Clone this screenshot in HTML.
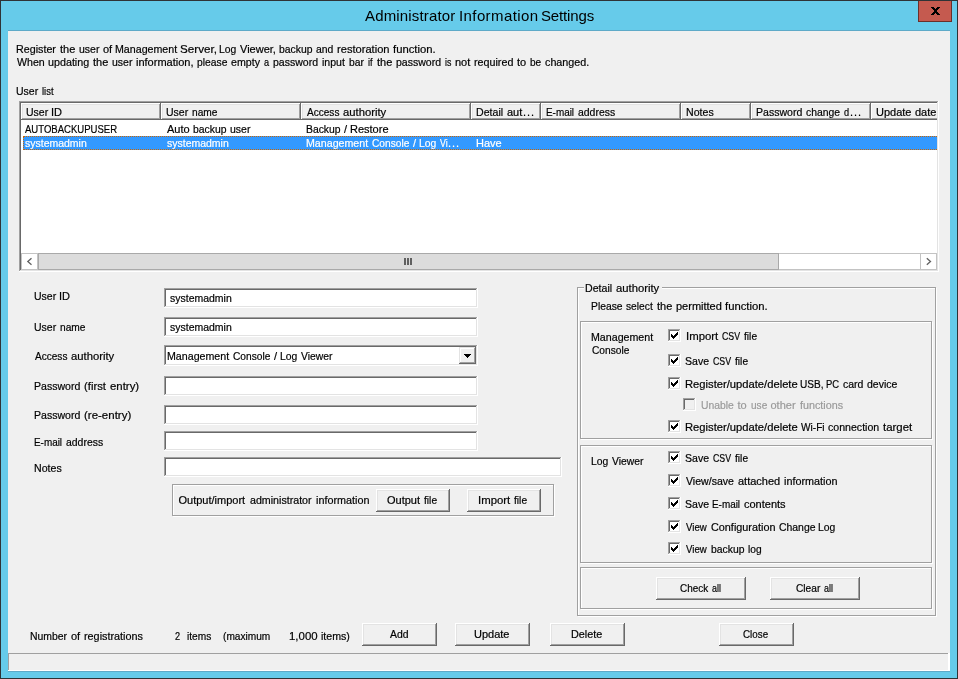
<!DOCTYPE html>
<html lang="en"><head><meta charset="utf-8"><title>Administrator Information Settings</title>
<style>
html,body{margin:0;padding:0}
body{width:958px;height:679px;position:relative;overflow:hidden;background:#66CBEA;font-family:"Liberation Sans",sans-serif;font-size:11px;line-height:13px;color:#000}
#w{position:absolute;left:0;top:0;width:958px;height:679px;overflow:hidden;will-change:transform}
#w div,#w span,#w svg{position:absolute;box-sizing:border-box}
#w span{white-space:pre;transform-origin:0 0;-webkit-text-stroke:0.2px currentColor}
#w .big{font-size:15px;line-height:20px;-webkit-text-stroke:0}
</style></head>
<body><div id="w">
<div style="left:0px;top:0px;width:958px;height:679px;background:#2F3336;"></div>
<div style="left:1px;top:1px;width:956px;height:677px;background:#66CBEA;"></div>
<div style="left:8px;top:30px;width:942px;height:1px;background:#5EAAC8;"></div>
<div style="left:8px;top:671px;width:942px;height:1px;background:#5EAAC8;"></div>
<div style="left:8px;top:31px;width:942px;height:640px;background:#F0F0F0;"></div>
<span class="big" style="left:365px;top:6px;letter-spacing:0.167px;">Administrator </span>
<span class="big" style="left:459px;top:6px;letter-spacing:0.4px;">Information </span>
<span class="big" style="left:541px;top:6px;letter-spacing:-0.143px;">Settings</span>
<div style="left:918px;top:1px;width:34px;height:21px;background:#C55A4F;border:1px solid #6B2F2A;border-top:0"></div>
<svg style="left:931px;top:7px" width="9" height="8" viewBox="0 0 9 8" shape-rendering="crispEdges"><g fill="#000"><rect x="0" y="0" width="3" height="1"/><rect x="6" y="0" width="3" height="1"/><rect x="1" y="1" width="3" height="1"/><rect x="5" y="1" width="3" height="1"/><rect x="2" y="2" width="5" height="1"/><rect x="3" y="3" width="3" height="1"/><rect x="3" y="4" width="3" height="1"/><rect x="2" y="5" width="5" height="1"/><rect x="1" y="6" width="3" height="1"/><rect x="5" y="6" width="3" height="1"/><rect x="0" y="7" width="3" height="1"/><rect x="6" y="7" width="3" height="1"/></g></svg>
<span style="left:16px;top:43px;transform:scaleX(0.975);">Register </span>
<span style="left:60px;top:43px;">the </span>
<span style="left:79px;top:43px;transform:scaleX(0.9524);">user </span>
<span style="left:103px;top:43px;">of </span>
<span style="left:115px;top:43px;transform:scaleX(0.9683);">Management </span>
<span style="left:180px;top:43px;transform:scaleX(1.0606);">Server, </span>
<span style="left:219px;top:43px;transform:scaleX(0.9412);">Log </span>
<span style="left:240px;top:43px;">Viewer, </span>
<span style="left:279px;top:43px;transform:scaleX(0.9429);">backup </span>
<span style="left:316px;top:43px;transform:scaleX(0.9444);">and </span>
<span style="left:337px;top:43px;transform:scaleX(1.0102);">restoration </span>
<span style="left:393px;top:43px;transform:scaleX(1.0244);">function.</span>
<span style="left:17px;top:56px;transform:scaleX(0.9643);">When </span>
<span style="left:48px;top:56px;transform:scaleX(0.9762);">updating </span>
<span style="left:93px;top:56px;">the </span>
<span style="left:112px;top:56px;transform:scaleX(0.9524);">user </span>
<span style="left:136px;top:56px;">information, </span>
<span style="left:197px;top:56px;transform:scaleX(0.9375);">please </span>
<span style="left:231px;top:56px;transform:scaleX(0.9667);">empty </span>
<span style="left:264px;top:56px;transform:scaleX(0.8333);">a </span>
<span style="left:273px;top:56px;transform:scaleX(0.9574);">password </span>
<span style="left:322px;top:56px;transform:scaleX(0.9583);">input </span>
<span style="left:349px;top:56px;transform:scaleX(0.9375);">bar </span>
<span style="left:368px;top:56px;transform:scaleX(0.8333);">if </span>
<span style="left:377px;top:56px;">the </span>
<span style="left:396px;top:56px;transform:scaleX(0.9574);">password </span>
<span style="left:445px;top:56px;transform:scaleX(0.8);">is </span>
<span style="left:455px;top:56px;">not </span>
<span style="left:474px;top:56px;transform:scaleX(0.975);">required </span>
<span style="left:517px;top:56px;">to </span>
<span style="left:530px;top:56px;transform:scaleX(0.9167);">be </span>
<span style="left:545px;top:56px;transform:scaleX(0.9778);">changed.</span>
<span style="left:16px;top:85px;transform:scaleX(0.9545);">User </span>
<span style="left:42px;top:85px;transform:scaleX(0.8571);">list</span>
<div style="left:19px;top:101px;width:920px;height:171px;background:#FFFFFF;"></div>
<div style="left:19px;top:101px;width:919px;height:170px;background:#A0A0A0;"></div>
<div style="left:20px;top:102px;width:918px;height:169px;background:#E3E3E3;"></div>
<div style="left:20px;top:102px;width:917px;height:168px;background:#696969;"></div>
<div style="left:21px;top:103px;width:916px;height:167px;background:#FFFFFF;"></div>
<div style="left:21px;top:103px;width:140px;height:17px;background:#696969;"></div>
<div style="left:21px;top:103px;width:139px;height:16px;background:#FFFFFF;"></div>
<div style="left:22px;top:104px;width:138px;height:15px;background:#A0A0A0;"></div>
<div style="left:22px;top:104px;width:137px;height:14px;background:#E3E3E3;"></div>
<div style="left:23px;top:105px;width:136px;height:13px;background:#F0F0F0;"></div>
<span style="left:26px;top:106px;transform:scaleX(0.9545);">User </span>
<span style="left:51px;top:106px;">ID</span>
<div style="left:161px;top:103px;width:140px;height:17px;background:#696969;"></div>
<div style="left:161px;top:103px;width:139px;height:16px;background:#FFFFFF;"></div>
<div style="left:162px;top:104px;width:138px;height:15px;background:#A0A0A0;"></div>
<div style="left:162px;top:104px;width:137px;height:14px;background:#E3E3E3;"></div>
<div style="left:163px;top:105px;width:136px;height:13px;background:#F0F0F0;"></div>
<span style="left:166px;top:106px;transform:scaleX(0.9545);">User </span>
<span style="left:192px;top:106px;transform:scaleX(0.9259);">name</span>
<div style="left:301px;top:103px;width:170px;height:17px;background:#696969;"></div>
<div style="left:301px;top:103px;width:169px;height:16px;background:#FFFFFF;"></div>
<div style="left:302px;top:104px;width:168px;height:15px;background:#A0A0A0;"></div>
<div style="left:302px;top:104px;width:167px;height:14px;background:#E3E3E3;"></div>
<div style="left:303px;top:105px;width:166px;height:13px;background:#F0F0F0;"></div>
<span style="left:307px;top:106px;transform:scaleX(0.9143);">Access </span>
<span style="left:343px;top:106px;transform:scaleX(1.0238);">authority</span>
<div style="left:471px;top:103px;width:70px;height:17px;background:#696969;"></div>
<div style="left:471px;top:103px;width:69px;height:16px;background:#FFFFFF;"></div>
<div style="left:472px;top:104px;width:68px;height:15px;background:#A0A0A0;"></div>
<div style="left:472px;top:104px;width:67px;height:14px;background:#E3E3E3;"></div>
<div style="left:473px;top:105px;width:66px;height:13px;background:#F0F0F0;"></div>
<span style="left:476px;top:106px;transform:scaleX(0.963);">Detail </span>
<span style="left:507px;top:106px;">aut</span>
<span style="left:523px;top:106px;letter-spacing:1.0px;">...</span>
<div style="left:541px;top:103px;width:140px;height:17px;background:#696969;"></div>
<div style="left:541px;top:103px;width:139px;height:16px;background:#FFFFFF;"></div>
<div style="left:542px;top:104px;width:138px;height:15px;background:#A0A0A0;"></div>
<div style="left:542px;top:104px;width:137px;height:14px;background:#E3E3E3;"></div>
<div style="left:543px;top:105px;width:136px;height:13px;background:#F0F0F0;"></div>
<span style="left:546px;top:106px;transform:scaleX(0.9);">E-mail </span>
<span style="left:578px;top:106px;transform:scaleX(0.9487);">address</span>
<div style="left:681px;top:103px;width:70px;height:17px;background:#696969;"></div>
<div style="left:681px;top:103px;width:69px;height:16px;background:#FFFFFF;"></div>
<div style="left:682px;top:104px;width:68px;height:15px;background:#A0A0A0;"></div>
<div style="left:682px;top:104px;width:67px;height:14px;background:#E3E3E3;"></div>
<div style="left:683px;top:105px;width:66px;height:13px;background:#F0F0F0;"></div>
<span style="left:686px;top:106px;transform:scaleX(0.9643);">Notes</span>
<div style="left:751px;top:103px;width:120px;height:17px;background:#696969;"></div>
<div style="left:751px;top:103px;width:119px;height:16px;background:#FFFFFF;"></div>
<div style="left:752px;top:104px;width:118px;height:15px;background:#A0A0A0;"></div>
<div style="left:752px;top:104px;width:117px;height:14px;background:#E3E3E3;"></div>
<div style="left:753px;top:105px;width:116px;height:13px;background:#F0F0F0;"></div>
<span style="left:756px;top:106px;transform:scaleX(0.9574);">Password </span>
<span style="left:806px;top:106px;transform:scaleX(0.9444);">change </span>
<span style="left:844px;top:106px;transform:scaleX(0.8333);">d</span>
<span style="left:850px;top:106px;letter-spacing:1.0px;">...</span>
<div style="left:871px;top:103px;width:66px;height:17px;background:#F0F0F0;"></div>
<div style="left:871px;top:103px;width:66px;height:1px;background:#FFFFFF;"></div>
<div style="left:871px;top:103px;width:1px;height:16px;background:#FFFFFF;"></div>
<div style="left:872px;top:118px;width:65px;height:1px;background:#A0A0A0;"></div>
<div style="left:871px;top:119px;width:66px;height:1px;background:#696969;"></div>
<span style="left:876px;top:106px;">Update </span>
<span style="left:915px;top:106px;">date</span>
<span style="left:25px;top:123px;transform:scaleX(0.8679);">AUTOBACKUPUSER</span>
<span style="left:167px;top:123px;">Auto </span>
<span style="left:193px;top:123px;transform:scaleX(0.9429);">backup </span>
<span style="left:230px;top:123px;transform:scaleX(0.9524);">user</span>
<span style="left:306px;top:123px;transform:scaleX(0.9429);">Backup </span>
<span style="left:344px;top:123px;">/ </span>
<span style="left:350px;top:123px;">Restore</span>
<div style="left:23px;top:136px;width:914px;height:14px;background:#3399FF;border:1px dotted #CC6600;border-right:0"></div>
<span style="left:25px;top:137px;transform:scaleX(0.9531);color:#fff;">systemadmin</span>
<span style="left:167px;top:137px;transform:scaleX(0.9531);color:#fff;">systemadmin</span>
<span style="left:306px;top:137px;transform:scaleX(0.9683);color:#fff;">Management </span>
<span style="left:372px;top:137px;transform:scaleX(0.925);color:#fff;">Console </span>
<span style="left:413px;top:137px;color:#fff;">/ </span>
<span style="left:419px;top:137px;transform:scaleX(0.9412);color:#fff;">Log </span>
<span style="left:440px;top:137px;transform:scaleX(0.8);color:#fff;">Vi</span>
<span style="left:448px;top:137px;letter-spacing:1.0px;color:#fff;">...</span>
<span style="left:476px;top:137px;color:#fff;">Have</span>
<div style="left:21px;top:253px;width:916px;height:17px;background:#FFFFFF;border:1px solid #C3C3C3"></div>
<div style="left:38px;top:253px;width:741px;height:17px;background:#DCDCDC;border:1px solid #A9A9A9"></div>
<svg style="left:404px;top:258px" width="8" height="7" viewBox="0 0 8 7" shape-rendering="crispEdges"><g fill="#606060"><rect x="0" y="0" width="2" height="7"/><rect x="3" y="0" width="2" height="7"/><rect x="6" y="0" width="2" height="7"/></g></svg>
<svg style="left:26px;top:257px" width="8" height="9" viewBox="0 0 8 9" shape-rendering="crispEdges"><g shape-rendering="geometricPrecision"><path d="M5.5 1.2 L1.8 4.5 L5.5 7.8" stroke="#606060" stroke-width="1.3" fill="none"/></g></svg>
<svg style="left:925px;top:257px" width="8" height="9" viewBox="0 0 8 9" shape-rendering="crispEdges"><g shape-rendering="geometricPrecision"><path d="M1.8 1.2 L5.5 4.5 L1.8 7.8" stroke="#606060" stroke-width="1.3" fill="none"/></g></svg>
<div style="left:37px;top:253px;width:1px;height:17px;background:#C3C3C3;"></div>
<div style="left:920px;top:253px;width:1px;height:17px;background:#C3C3C3;"></div>
<span style="left:34px;top:290px;transform:scaleX(0.9545);">User </span>
<span style="left:59px;top:290px;">ID</span>
<span style="left:34px;top:321px;transform:scaleX(0.9545);">User </span>
<span style="left:60px;top:321px;transform:scaleX(0.9259);">name</span>
<span style="left:35px;top:350px;transform:scaleX(0.9143);">Access </span>
<span style="left:71px;top:350px;transform:scaleX(1.0238);">authority</span>
<span style="left:34px;top:380px;transform:scaleX(0.9574);">Password </span>
<span style="left:84px;top:380px;transform:scaleX(1.026);">(first </span>
<span style="left:110px;top:380px;transform:scaleX(1.0357);">entry)</span>
<span style="left:34px;top:409px;transform:scaleX(0.9574);">Password </span>
<span style="left:84px;top:409px;transform:scaleX(1.0444);">(re-entry)</span>
<span style="left:34px;top:436px;transform:scaleX(0.9);">E-mail </span>
<span style="left:66px;top:436px;transform:scaleX(0.9487);">address</span>
<span style="left:34px;top:462px;transform:scaleX(0.9643);">Notes</span>
<div style="left:164px;top:288px;width:314px;height:20px;background:#FFFFFF;"></div>
<div style="left:164px;top:288px;width:313px;height:19px;background:#A0A0A0;"></div>
<div style="left:165px;top:289px;width:312px;height:18px;background:#E3E3E3;"></div>
<div style="left:165px;top:289px;width:311px;height:17px;background:#696969;"></div>
<div style="left:166px;top:290px;width:310px;height:16px;background:#FFFFFF;"></div>
<span style="left:170px;top:292px;transform:scaleX(0.9531);">systemadmin</span>
<div style="left:164px;top:317px;width:314px;height:20px;background:#FFFFFF;"></div>
<div style="left:164px;top:317px;width:313px;height:19px;background:#A0A0A0;"></div>
<div style="left:165px;top:318px;width:312px;height:18px;background:#E3E3E3;"></div>
<div style="left:165px;top:318px;width:311px;height:17px;background:#696969;"></div>
<div style="left:166px;top:319px;width:310px;height:16px;background:#FFFFFF;"></div>
<span style="left:170px;top:321px;transform:scaleX(0.9531);">systemadmin</span>
<div style="left:164px;top:345px;width:314px;height:21px;background:#FFFFFF;"></div>
<div style="left:164px;top:345px;width:313px;height:20px;background:#A0A0A0;"></div>
<div style="left:165px;top:346px;width:312px;height:19px;background:#E3E3E3;"></div>
<div style="left:165px;top:346px;width:311px;height:18px;background:#696969;"></div>
<div style="left:166px;top:347px;width:310px;height:17px;background:#FFFFFF;"></div>
<span style="left:167px;top:350px;transform:scaleX(0.9683);">Management </span>
<span style="left:233px;top:350px;transform:scaleX(0.925);">Console </span>
<span style="left:274px;top:350px;">/ </span>
<span style="left:280px;top:350px;transform:scaleX(0.9412);">Log </span>
<span style="left:301px;top:350px;transform:scaleX(0.9394);">Viewer</span>
<div style="left:459px;top:347px;width:17px;height:17px;background:#696969;"></div>
<div style="left:459px;top:347px;width:16px;height:16px;background:#E3E3E3;"></div>
<div style="left:460px;top:348px;width:15px;height:15px;background:#A0A0A0;"></div>
<div style="left:460px;top:348px;width:14px;height:14px;background:#FFFFFF;"></div>
<div style="left:461px;top:349px;width:13px;height:13px;background:#F0F0F0;"></div>
<svg style="left:464px;top:354px" width="7" height="4" viewBox="0 0 7 4" shape-rendering="crispEdges"><g fill="#000"><rect x="0" y="0" width="7" height="1"/><rect x="1" y="1" width="5" height="1"/><rect x="2" y="2" width="3" height="1"/><rect x="3" y="3" width="1" height="1"/></g></svg>
<div style="left:164px;top:376px;width:314px;height:20px;background:#FFFFFF;"></div>
<div style="left:164px;top:376px;width:313px;height:19px;background:#A0A0A0;"></div>
<div style="left:165px;top:377px;width:312px;height:18px;background:#E3E3E3;"></div>
<div style="left:165px;top:377px;width:311px;height:17px;background:#696969;"></div>
<div style="left:166px;top:378px;width:310px;height:16px;background:#FFFFFF;"></div>
<div style="left:164px;top:405px;width:314px;height:20px;background:#FFFFFF;"></div>
<div style="left:164px;top:405px;width:313px;height:19px;background:#A0A0A0;"></div>
<div style="left:165px;top:406px;width:312px;height:18px;background:#E3E3E3;"></div>
<div style="left:165px;top:406px;width:311px;height:17px;background:#696969;"></div>
<div style="left:166px;top:407px;width:310px;height:16px;background:#FFFFFF;"></div>
<div style="left:164px;top:431px;width:314px;height:20px;background:#FFFFFF;"></div>
<div style="left:164px;top:431px;width:313px;height:19px;background:#A0A0A0;"></div>
<div style="left:165px;top:432px;width:312px;height:18px;background:#E3E3E3;"></div>
<div style="left:165px;top:432px;width:311px;height:17px;background:#696969;"></div>
<div style="left:166px;top:433px;width:310px;height:16px;background:#FFFFFF;"></div>
<div style="left:164px;top:457px;width:398px;height:20px;background:#FFFFFF;"></div>
<div style="left:164px;top:457px;width:397px;height:19px;background:#A0A0A0;"></div>
<div style="left:165px;top:458px;width:396px;height:18px;background:#E3E3E3;"></div>
<div style="left:165px;top:458px;width:395px;height:17px;background:#696969;"></div>
<div style="left:166px;top:459px;width:394px;height:16px;background:#FFFFFF;"></div>
<div style="left:173px;top:485px;width:382px;height:32px;border:1px solid #FFFFFF"></div>
<div style="left:172px;top:484px;width:382px;height:32px;border:1px solid #A0A0A0"></div>
<span style="left:178.5px;top:494px;">Output/import </span>
<span style="left:249.5px;top:494px;transform:scaleX(0.9688);">administrator </span>
<span style="left:315.5px;top:494px;transform:scaleX(0.9815);">information</span>
<div style="left:376px;top:489px;width:74px;height:23px;background:#696969;"></div>
<div style="left:376px;top:489px;width:73px;height:22px;background:#FFFFFF;"></div>
<div style="left:377px;top:490px;width:72px;height:21px;background:#A0A0A0;"></div>
<div style="left:377px;top:490px;width:71px;height:20px;background:#E3E3E3;"></div>
<div style="left:378px;top:491px;width:70px;height:19px;background:#F0F0F0;"></div>
<span style="left:387px;top:494px;">Output </span>
<span style="left:424px;top:494px;transform:scaleX(0.9286);">file</span>
<div style="left:467px;top:489px;width:74px;height:23px;background:#696969;"></div>
<div style="left:467px;top:489px;width:73px;height:22px;background:#FFFFFF;"></div>
<div style="left:468px;top:490px;width:72px;height:21px;background:#A0A0A0;"></div>
<div style="left:468px;top:490px;width:71px;height:20px;background:#E3E3E3;"></div>
<div style="left:469px;top:491px;width:70px;height:19px;background:#F0F0F0;"></div>
<span style="left:478px;top:494px;transform:scaleX(1.0333);">Import </span>
<span style="left:514px;top:494px;transform:scaleX(0.9286);">file</span>
<div style="left:578px;top:288px;width:359px;height:329px;border:1px solid #FFFFFF"></div>
<div style="left:577px;top:287px;width:359px;height:329px;border:1px solid #A0A0A0"></div>
<div style="left:584px;top:286px;width:78px;height:4px;background:#F0F0F0;"></div>
<span style="left:585px;top:282px;transform:scaleX(0.963);">Detail </span>
<span style="left:616px;top:282px;transform:scaleX(1.0238);">authority</span>
<span style="left:591px;top:300px;transform:scaleX(0.9375);">Please </span>
<span style="left:626px;top:300px;transform:scaleX(0.931);">select </span>
<span style="left:657px;top:300px;">the </span>
<span style="left:676px;top:300px;">permitted </span>
<span style="left:725px;top:300px;transform:scaleX(1.0244);">function.</span>
<div style="left:581px;top:322px;width:352px;height:118px;border:1px solid #FFFFFF"></div>
<div style="left:580px;top:321px;width:352px;height:118px;border:1px solid #A0A0A0"></div>
<span style="left:591px;top:331px;transform:scaleX(0.9683);">Management</span>
<span style="left:592px;top:344px;transform:scaleX(0.925);">Console</span>
<div style="left:668px;top:329px;width:13px;height:13px;background:#FFFFFF;"></div>
<div style="left:668px;top:329px;width:12px;height:12px;background:#A0A0A0;"></div>
<div style="left:669px;top:330px;width:11px;height:11px;background:#E3E3E3;"></div>
<div style="left:669px;top:330px;width:10px;height:10px;background:#696969;"></div>
<div style="left:670px;top:331px;width:9px;height:9px;background:#FFFFFF;"></div>
<svg style="left:668px;top:329px" width="13" height="13" viewBox="0 0 13 13" shape-rendering="crispEdges"><g fill="#000"><rect x="3" y="5" width="1" height="3"/><rect x="4" y="6" width="1" height="3"/><rect x="5" y="7" width="1" height="3"/><rect x="6" y="6" width="1" height="3"/><rect x="7" y="5" width="1" height="3"/><rect x="8" y="4" width="1" height="3"/><rect x="9" y="3" width="1" height="3"/></g></svg>
<span style="left:686px;top:330px;transform:scaleX(1.0333);">Import </span>
<span style="left:722px;top:330px;transform:scaleX(0.8);">CSV </span>
<span style="left:744px;top:330px;transform:scaleX(0.9286);">file</span>
<div style="left:668px;top:354px;width:13px;height:13px;background:#FFFFFF;"></div>
<div style="left:668px;top:354px;width:12px;height:12px;background:#A0A0A0;"></div>
<div style="left:669px;top:355px;width:11px;height:11px;background:#E3E3E3;"></div>
<div style="left:669px;top:355px;width:10px;height:10px;background:#696969;"></div>
<div style="left:670px;top:356px;width:9px;height:9px;background:#FFFFFF;"></div>
<svg style="left:668px;top:354px" width="13" height="13" viewBox="0 0 13 13" shape-rendering="crispEdges"><g fill="#000"><rect x="3" y="5" width="1" height="3"/><rect x="4" y="6" width="1" height="3"/><rect x="5" y="7" width="1" height="3"/><rect x="6" y="6" width="1" height="3"/><rect x="7" y="5" width="1" height="3"/><rect x="8" y="4" width="1" height="3"/><rect x="9" y="3" width="1" height="3"/></g></svg>
<span style="left:685px;top:355px;transform:scaleX(0.9583);">Save </span>
<span style="left:713px;top:355px;transform:scaleX(0.8);">CSV </span>
<span style="left:735px;top:355px;transform:scaleX(0.9286);">file</span>
<div style="left:668px;top:377px;width:13px;height:13px;background:#FFFFFF;"></div>
<div style="left:668px;top:377px;width:12px;height:12px;background:#A0A0A0;"></div>
<div style="left:669px;top:378px;width:11px;height:11px;background:#E3E3E3;"></div>
<div style="left:669px;top:378px;width:10px;height:10px;background:#696969;"></div>
<div style="left:670px;top:379px;width:9px;height:9px;background:#FFFFFF;"></div>
<svg style="left:668px;top:377px" width="13" height="13" viewBox="0 0 13 13" shape-rendering="crispEdges"><g fill="#000"><rect x="3" y="5" width="1" height="3"/><rect x="4" y="6" width="1" height="3"/><rect x="5" y="7" width="1" height="3"/><rect x="6" y="6" width="1" height="3"/><rect x="7" y="5" width="1" height="3"/><rect x="8" y="4" width="1" height="3"/><rect x="9" y="3" width="1" height="3"/></g></svg>
<span style="left:685px;top:378px;transform:scaleX(1.0183);">Register/update/delete </span>
<span style="left:800px;top:378px;transform:scaleX(0.9167);">USB, </span>
<span style="left:826px;top:378px;transform:scaleX(0.8571);">PC </span>
<span style="left:843px;top:378px;transform:scaleX(0.9524);">card </span>
<span style="left:867px;top:378px;transform:scaleX(0.9542);">device</span>
<div style="left:683px;top:398px;width:13px;height:13px;background:#FFFFFF;"></div>
<div style="left:683px;top:398px;width:12px;height:12px;background:#A0A0A0;"></div>
<div style="left:684px;top:399px;width:11px;height:11px;background:#E3E3E3;"></div>
<div style="left:684px;top:399px;width:10px;height:10px;background:#696969;"></div>
<div style="left:685px;top:400px;width:9px;height:9px;background:#F0F0F0;"></div>
<span style="left:700.5px;top:399px;transform:scaleX(0.9412);color:#9A9A9A;">Unable </span>
<span style="left:737.5px;top:399px;color:#9A9A9A;">to </span>
<span style="left:750.5px;top:399px;transform:scaleX(0.9153);color:#9A9A9A;">use </span>
<span style="left:770.5px;top:399px;color:#9A9A9A;">other </span>
<span style="left:799.5px;top:399px;transform:scaleX(0.9773);color:#9A9A9A;">functions</span>
<div style="left:668px;top:420px;width:13px;height:13px;background:#FFFFFF;"></div>
<div style="left:668px;top:420px;width:12px;height:12px;background:#A0A0A0;"></div>
<div style="left:669px;top:421px;width:11px;height:11px;background:#E3E3E3;"></div>
<div style="left:669px;top:421px;width:10px;height:10px;background:#696969;"></div>
<div style="left:670px;top:422px;width:9px;height:9px;background:#FFFFFF;"></div>
<svg style="left:668px;top:420px" width="13" height="13" viewBox="0 0 13 13" shape-rendering="crispEdges"><g fill="#000"><rect x="3" y="5" width="1" height="3"/><rect x="4" y="6" width="1" height="3"/><rect x="5" y="7" width="1" height="3"/><rect x="6" y="6" width="1" height="3"/><rect x="7" y="5" width="1" height="3"/><rect x="8" y="4" width="1" height="3"/><rect x="9" y="3" width="1" height="3"/></g></svg>
<span style="left:685px;top:421px;transform:scaleX(1.0183);">Register/update/delete </span>
<span style="left:801px;top:421px;transform:scaleX(0.92);">Wi-Fi </span>
<span style="left:828px;top:421px;transform:scaleX(0.9623);">connection </span>
<span style="left:883px;top:421px;transform:scaleX(1.0357);">target</span>
<div style="left:581px;top:446px;width:352px;height:118px;border:1px solid #FFFFFF"></div>
<div style="left:580px;top:445px;width:352px;height:118px;border:1px solid #A0A0A0"></div>
<span style="left:591px;top:455px;transform:scaleX(0.9412);">Log </span>
<span style="left:612px;top:455px;transform:scaleX(0.9394);">Viewer</span>
<div style="left:668px;top:451px;width:13px;height:13px;background:#FFFFFF;"></div>
<div style="left:668px;top:451px;width:12px;height:12px;background:#A0A0A0;"></div>
<div style="left:669px;top:452px;width:11px;height:11px;background:#E3E3E3;"></div>
<div style="left:669px;top:452px;width:10px;height:10px;background:#696969;"></div>
<div style="left:670px;top:453px;width:9px;height:9px;background:#FFFFFF;"></div>
<svg style="left:668px;top:451px" width="13" height="13" viewBox="0 0 13 13" shape-rendering="crispEdges"><g fill="#000"><rect x="3" y="5" width="1" height="3"/><rect x="4" y="6" width="1" height="3"/><rect x="5" y="7" width="1" height="3"/><rect x="6" y="6" width="1" height="3"/><rect x="7" y="5" width="1" height="3"/><rect x="8" y="4" width="1" height="3"/><rect x="9" y="3" width="1" height="3"/></g></svg>
<span style="left:685px;top:452px;transform:scaleX(0.9583);">Save </span>
<span style="left:713px;top:452px;transform:scaleX(0.8);">CSV </span>
<span style="left:735px;top:452px;transform:scaleX(0.9286);">file</span>
<div style="left:668px;top:474px;width:13px;height:13px;background:#FFFFFF;"></div>
<div style="left:668px;top:474px;width:12px;height:12px;background:#A0A0A0;"></div>
<div style="left:669px;top:475px;width:11px;height:11px;background:#E3E3E3;"></div>
<div style="left:669px;top:475px;width:10px;height:10px;background:#696969;"></div>
<div style="left:670px;top:476px;width:9px;height:9px;background:#FFFFFF;"></div>
<svg style="left:668px;top:474px" width="13" height="13" viewBox="0 0 13 13" shape-rendering="crispEdges"><g fill="#000"><rect x="3" y="5" width="1" height="3"/><rect x="4" y="6" width="1" height="3"/><rect x="5" y="7" width="1" height="3"/><rect x="6" y="6" width="1" height="3"/><rect x="7" y="5" width="1" height="3"/><rect x="8" y="4" width="1" height="3"/><rect x="9" y="3" width="1" height="3"/></g></svg>
<span style="left:686px;top:475px;transform:scaleX(0.96);">View/save </span>
<span style="left:738px;top:475px;">attached </span>
<span style="left:784px;top:475px;transform:scaleX(0.9815);">information</span>
<div style="left:668px;top:497px;width:13px;height:13px;background:#FFFFFF;"></div>
<div style="left:668px;top:497px;width:12px;height:12px;background:#A0A0A0;"></div>
<div style="left:669px;top:498px;width:11px;height:11px;background:#E3E3E3;"></div>
<div style="left:669px;top:498px;width:10px;height:10px;background:#696969;"></div>
<div style="left:670px;top:499px;width:9px;height:9px;background:#FFFFFF;"></div>
<svg style="left:668px;top:497px" width="13" height="13" viewBox="0 0 13 13" shape-rendering="crispEdges"><g fill="#000"><rect x="3" y="5" width="1" height="3"/><rect x="4" y="6" width="1" height="3"/><rect x="5" y="7" width="1" height="3"/><rect x="6" y="6" width="1" height="3"/><rect x="7" y="5" width="1" height="3"/><rect x="8" y="4" width="1" height="3"/><rect x="9" y="3" width="1" height="3"/></g></svg>
<span style="left:685px;top:498px;transform:scaleX(0.9583);">Save </span>
<span style="left:712px;top:498px;transform:scaleX(0.9);">E-mail </span>
<span style="left:744px;top:498px;">contents</span>
<div style="left:668px;top:520px;width:13px;height:13px;background:#FFFFFF;"></div>
<div style="left:668px;top:520px;width:12px;height:12px;background:#A0A0A0;"></div>
<div style="left:669px;top:521px;width:11px;height:11px;background:#E3E3E3;"></div>
<div style="left:669px;top:521px;width:10px;height:10px;background:#696969;"></div>
<div style="left:670px;top:522px;width:9px;height:9px;background:#FFFFFF;"></div>
<svg style="left:668px;top:520px" width="13" height="13" viewBox="0 0 13 13" shape-rendering="crispEdges"><g fill="#000"><rect x="3" y="5" width="1" height="3"/><rect x="4" y="6" width="1" height="3"/><rect x="5" y="7" width="1" height="3"/><rect x="6" y="6" width="1" height="3"/><rect x="7" y="5" width="1" height="3"/><rect x="8" y="4" width="1" height="3"/><rect x="9" y="3" width="1" height="3"/></g></svg>
<span style="left:686px;top:521px;transform:scaleX(0.875);">View </span>
<span style="left:711px;top:521px;transform:scaleX(0.9846);">Configuration </span>
<span style="left:779px;top:521px;transform:scaleX(0.9474);">Change </span>
<span style="left:818px;top:521px;transform:scaleX(0.9412);">Log</span>
<div style="left:668px;top:542px;width:13px;height:13px;background:#FFFFFF;"></div>
<div style="left:668px;top:542px;width:12px;height:12px;background:#A0A0A0;"></div>
<div style="left:669px;top:543px;width:11px;height:11px;background:#E3E3E3;"></div>
<div style="left:669px;top:543px;width:10px;height:10px;background:#696969;"></div>
<div style="left:670px;top:544px;width:9px;height:9px;background:#FFFFFF;"></div>
<svg style="left:668px;top:542px" width="13" height="13" viewBox="0 0 13 13" shape-rendering="crispEdges"><g fill="#000"><rect x="3" y="5" width="1" height="3"/><rect x="4" y="6" width="1" height="3"/><rect x="5" y="7" width="1" height="3"/><rect x="6" y="6" width="1" height="3"/><rect x="7" y="5" width="1" height="3"/><rect x="8" y="4" width="1" height="3"/><rect x="9" y="3" width="1" height="3"/></g></svg>
<span style="left:686px;top:543px;transform:scaleX(0.875);">View </span>
<span style="left:711px;top:543px;transform:scaleX(0.9429);">backup </span>
<span style="left:748px;top:543px;transform:scaleX(0.9286);">log</span>
<div style="left:581px;top:568px;width:352px;height:42px;border:1px solid #FFFFFF"></div>
<div style="left:580px;top:567px;width:352px;height:42px;border:1px solid #A0A0A0"></div>
<div style="left:656px;top:577px;width:90px;height:23px;background:#696969;"></div>
<div style="left:656px;top:577px;width:89px;height:22px;background:#FFFFFF;"></div>
<div style="left:657px;top:578px;width:88px;height:21px;background:#A0A0A0;"></div>
<div style="left:657px;top:578px;width:87px;height:20px;background:#E3E3E3;"></div>
<div style="left:658px;top:579px;width:86px;height:19px;background:#F0F0F0;"></div>
<span style="left:680px;top:582px;transform:scaleX(0.9032);">Check </span>
<span style="left:712px;top:582px;transform:scaleX(0.81);">all</span>
<div style="left:770px;top:577px;width:90px;height:23px;background:#696969;"></div>
<div style="left:770px;top:577px;width:89px;height:22px;background:#FFFFFF;"></div>
<div style="left:771px;top:578px;width:88px;height:21px;background:#A0A0A0;"></div>
<div style="left:771px;top:578px;width:87px;height:20px;background:#E3E3E3;"></div>
<div style="left:772px;top:579px;width:86px;height:19px;background:#F0F0F0;"></div>
<span style="left:796px;top:582px;transform:scaleX(0.9231);">Clear </span>
<span style="left:824px;top:582px;transform:scaleX(0.81);">all</span>
<span style="left:30px;top:630px;transform:scaleX(0.9474);">Number </span>
<span style="left:71px;top:630px;">of </span>
<span style="left:84px;top:630px;transform:scaleX(0.9833);">registrations</span>
<span style="left:175px;top:630px;transform:scaleX(0.8333);">2</span>
<span style="left:187px;top:630px;transform:scaleX(0.9231);">items</span>
<span style="left:223px;top:630px;transform:scaleX(0.9216);">(maximum</span>
<span style="left:289px;top:630px;transform:scaleX(1.0385);">1,000 </span>
<span style="left:321px;top:630px;transform:scaleX(0.9655);">items)</span>
<div style="left:362px;top:623px;width:75px;height:23px;background:#696969;"></div>
<div style="left:362px;top:623px;width:74px;height:22px;background:#FFFFFF;"></div>
<div style="left:363px;top:624px;width:73px;height:21px;background:#A0A0A0;"></div>
<div style="left:363px;top:624px;width:72px;height:20px;background:#E3E3E3;"></div>
<div style="left:364px;top:625px;width:71px;height:19px;background:#F0F0F0;"></div>
<span style="left:390px;top:628px;transform:scaleX(0.9474);">Add</span>
<div style="left:455px;top:623px;width:75px;height:23px;background:#696969;"></div>
<div style="left:455px;top:623px;width:74px;height:22px;background:#FFFFFF;"></div>
<div style="left:456px;top:624px;width:73px;height:21px;background:#A0A0A0;"></div>
<div style="left:456px;top:624px;width:72px;height:20px;background:#E3E3E3;"></div>
<div style="left:457px;top:625px;width:71px;height:19px;background:#F0F0F0;"></div>
<span style="left:474px;top:628px;">Update</span>
<div style="left:550px;top:623px;width:75px;height:23px;background:#696969;"></div>
<div style="left:550px;top:623px;width:74px;height:22px;background:#FFFFFF;"></div>
<div style="left:551px;top:624px;width:73px;height:21px;background:#A0A0A0;"></div>
<div style="left:551px;top:624px;width:72px;height:20px;background:#E3E3E3;"></div>
<div style="left:552px;top:625px;width:71px;height:19px;background:#F0F0F0;"></div>
<span style="left:571px;top:628px;transform:scaleX(0.985);">Delete</span>
<div style="left:719px;top:623px;width:75px;height:23px;background:#696969;"></div>
<div style="left:719px;top:623px;width:74px;height:22px;background:#FFFFFF;"></div>
<div style="left:720px;top:624px;width:73px;height:21px;background:#A0A0A0;"></div>
<div style="left:720px;top:624px;width:72px;height:20px;background:#E3E3E3;"></div>
<div style="left:721px;top:625px;width:71px;height:19px;background:#F0F0F0;"></div>
<span style="left:743px;top:628px;transform:scaleX(0.8929);">Close</span>
<div style="left:8px;top:653px;width:942px;height:18px;background:#FFFFFF;"></div>
<div style="left:8px;top:653px;width:940px;height:17px;background:#A0A0A0;"></div>
<div style="left:9px;top:654px;width:939px;height:16px;background:#F0F0F0;"></div>
</div></body></html>
